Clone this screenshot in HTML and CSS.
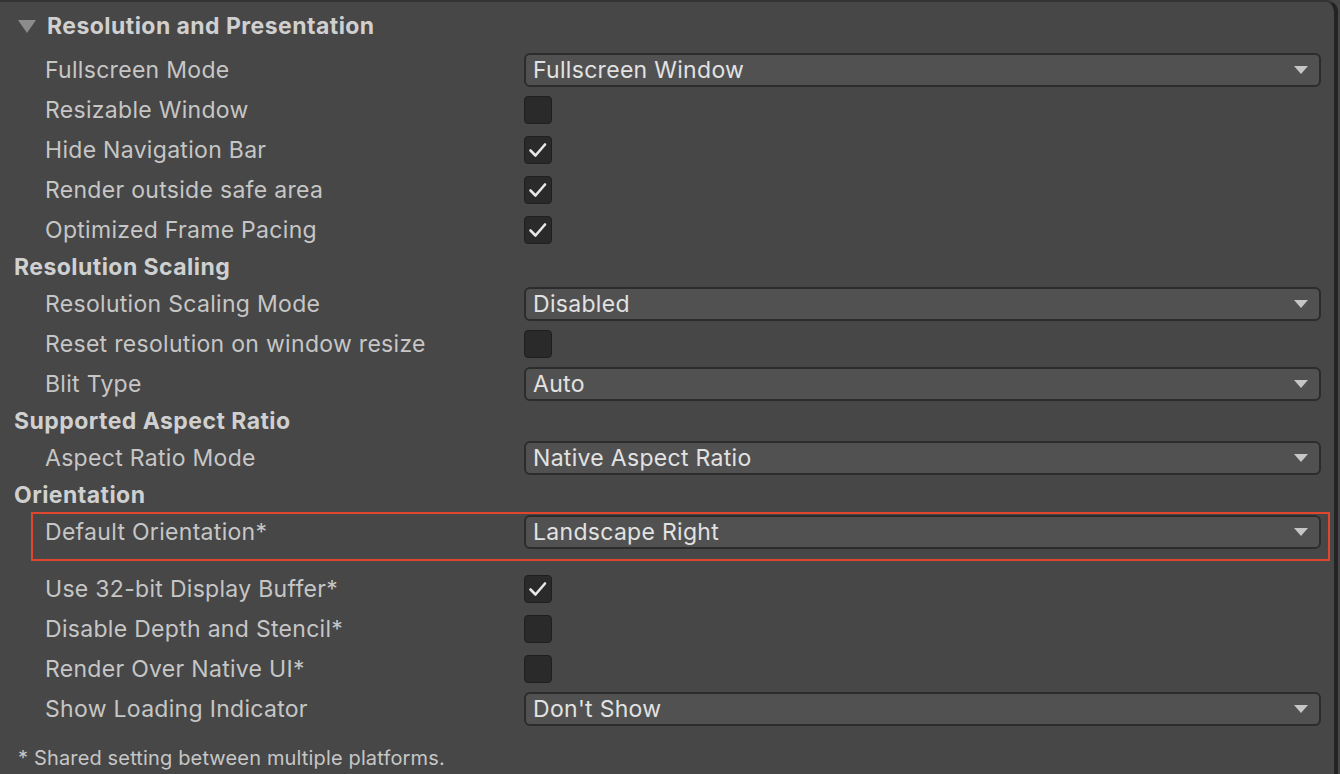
FILE: index.html
```html
<!DOCTYPE html>
<html>
<head>
<meta charset="utf-8">
<link rel="stylesheet" href="styles.css">
</head>
<body>
<div class="panel">
  <div class="header first">
    <svg class="fold" width="18" height="14" viewBox="0 0 18 14"><polygon points="0,0 18,0 9,13" fill="#8c8c8c"/></svg>
    <span>Resolution and Presentation</span>
  </div>

  <div class="row"><span class="label">Fullscreen Mode</span><div class="dropdown"><span>Fullscreen Window</span><i class="arrow"></i></div></div>
  <div class="row"><span class="label">Resizable Window</span><span class="check"></span></div>
  <div class="row"><span class="label">Hide Navigation Bar</span><span class="check on"><svg width="28" height="28" viewBox="0 0 28 28"><polyline points="6.5,14.5 11.5,19.5 21,8.5" fill="none" stroke="#e8e8e8" stroke-width="2.6" stroke-linecap="round" stroke-linejoin="round"/></svg></span></div>
  <div class="row"><span class="label">Render outside safe area</span><span class="check on"><svg width="28" height="28" viewBox="0 0 28 28"><polyline points="6.5,14.5 11.5,19.5 21,8.5" fill="none" stroke="#e8e8e8" stroke-width="2.6" stroke-linecap="round" stroke-linejoin="round"/></svg></span></div>
  <div class="row"><span class="label">Optimized Frame Pacing</span><span class="check on"><svg width="28" height="28" viewBox="0 0 28 28"><polyline points="6.5,14.5 11.5,19.5 21,8.5" fill="none" stroke="#e8e8e8" stroke-width="2.6" stroke-linecap="round" stroke-linejoin="round"/></svg></span></div>

  <div class="header">Resolution Scaling</div>
  <div class="row"><span class="label">Resolution Scaling Mode</span><div class="dropdown"><span>Disabled</span><i class="arrow"></i></div></div>
  <div class="row"><span class="label">Reset resolution on window resize</span><span class="check"></span></div>
  <div class="row"><span class="label">Blit Type</span><div class="dropdown"><span>Auto</span><i class="arrow"></i></div></div>

  <div class="header">Supported Aspect Ratio</div>
  <div class="row"><span class="label">Aspect Ratio Mode</span><div class="dropdown"><span>Native Aspect Ratio</span><i class="arrow"></i></div></div>

  <div class="header">Orientation</div>
  <div class="highlight">
    <div class="row inner"><span class="label">Default Orientation*</span><div class="dropdown"><span>Landscape Right</span><i class="arrow"></i></div></div>
  </div>
  <div class="row"><span class="label">Use 32-bit Display Buffer*</span><span class="check on"><svg width="28" height="28" viewBox="0 0 28 28"><polyline points="6.5,14.5 11.5,19.5 21,8.5" fill="none" stroke="#e8e8e8" stroke-width="2.6" stroke-linecap="round" stroke-linejoin="round"/></svg></span></div>
  <div class="row"><span class="label">Disable Depth and Stencil*</span><span class="check"></span></div>
  <div class="row"><span class="label">Render Over Native UI*</span><span class="check"></span></div>
  <div class="row"><span class="label">Show Loading Indicator</span><div class="dropdown"><span>Don't Show</span><i class="arrow"></i></div></div>

  <div class="footer">* Shared setting between multiple platforms.</div>
</div>
</body>
</html>
```

FILE: styles.css
```css
html, body {
  margin: 0;
  padding: 0;
  background: #474747;
  width: 1340px;
  height: 774px;
  overflow: hidden;
}

.panel {
  box-sizing: border-box;
  width: 1338px;
  height: 774px;
  background: #474747;
  border-top: 2px solid #333333;
  border-right: 4px solid #232323;
  border-top-right-radius: 12px;
  font-family: Inter, "Noto Sans", sans-serif;
  font-size: 23px;
  letter-spacing: 0.3px;
  color: #c6c6c6;
  display: flex;
  flex-direction: column;
}

.header {
  height: 34px;
  display: flex;
  align-items: center;
  padding-left: 14px;
  font-weight: 700;
  letter-spacing: 0.45px;
  color: #d0d0d0;
}

.header.first {
  height: 48px;
  padding-left: 18px;
  gap: 11px;
}

.fold {
  display: block;
  margin-top: 1px;
}

.row {
  height: 40px;
  display: grid;
  grid-template-columns: 479px 797px;
  align-items: center;
  padding-left: 45px;
}

.label {
  white-space: nowrap;
}

.dropdown {
  box-sizing: border-box;
  height: 34px;
  background: #515151;
  border: 2px solid #2c2c2c;
  border-radius: 6px;
  display: flex;
  align-items: center;
  justify-content: space-between;
  padding: 0 11px 0 7px;
  color: #e2e2e2;
}

.arrow {
  width: 0;
  height: 0;
  border-left: 7px solid transparent;
  border-right: 7px solid transparent;
  border-top: 8px solid #c6c6c6;
}

.check {
  box-sizing: border-box;
  width: 28px;
  height: 28px;
  background: #2a2a2a;
  border: 1px solid #1f1f1f;
  border-radius: 4px;
  position: relative;
}

.check svg {
  position: absolute;
  left: -1px;
  top: -1px;
}

.highlight {
  box-sizing: border-box;
  margin-left: 31px;
  width: 1299px;
  height: 49px;
  border: 2px solid #e0452d;
  margin-bottom: 8px;
}

.row.inner {
  height: 36px;
  padding-left: 12px;
}

.footer {
  padding-left: 18px;
  padding-top: 17px;
  font-size: 20px;
  letter-spacing: 0.15px;
  color: #c6c6c6;
}
```
